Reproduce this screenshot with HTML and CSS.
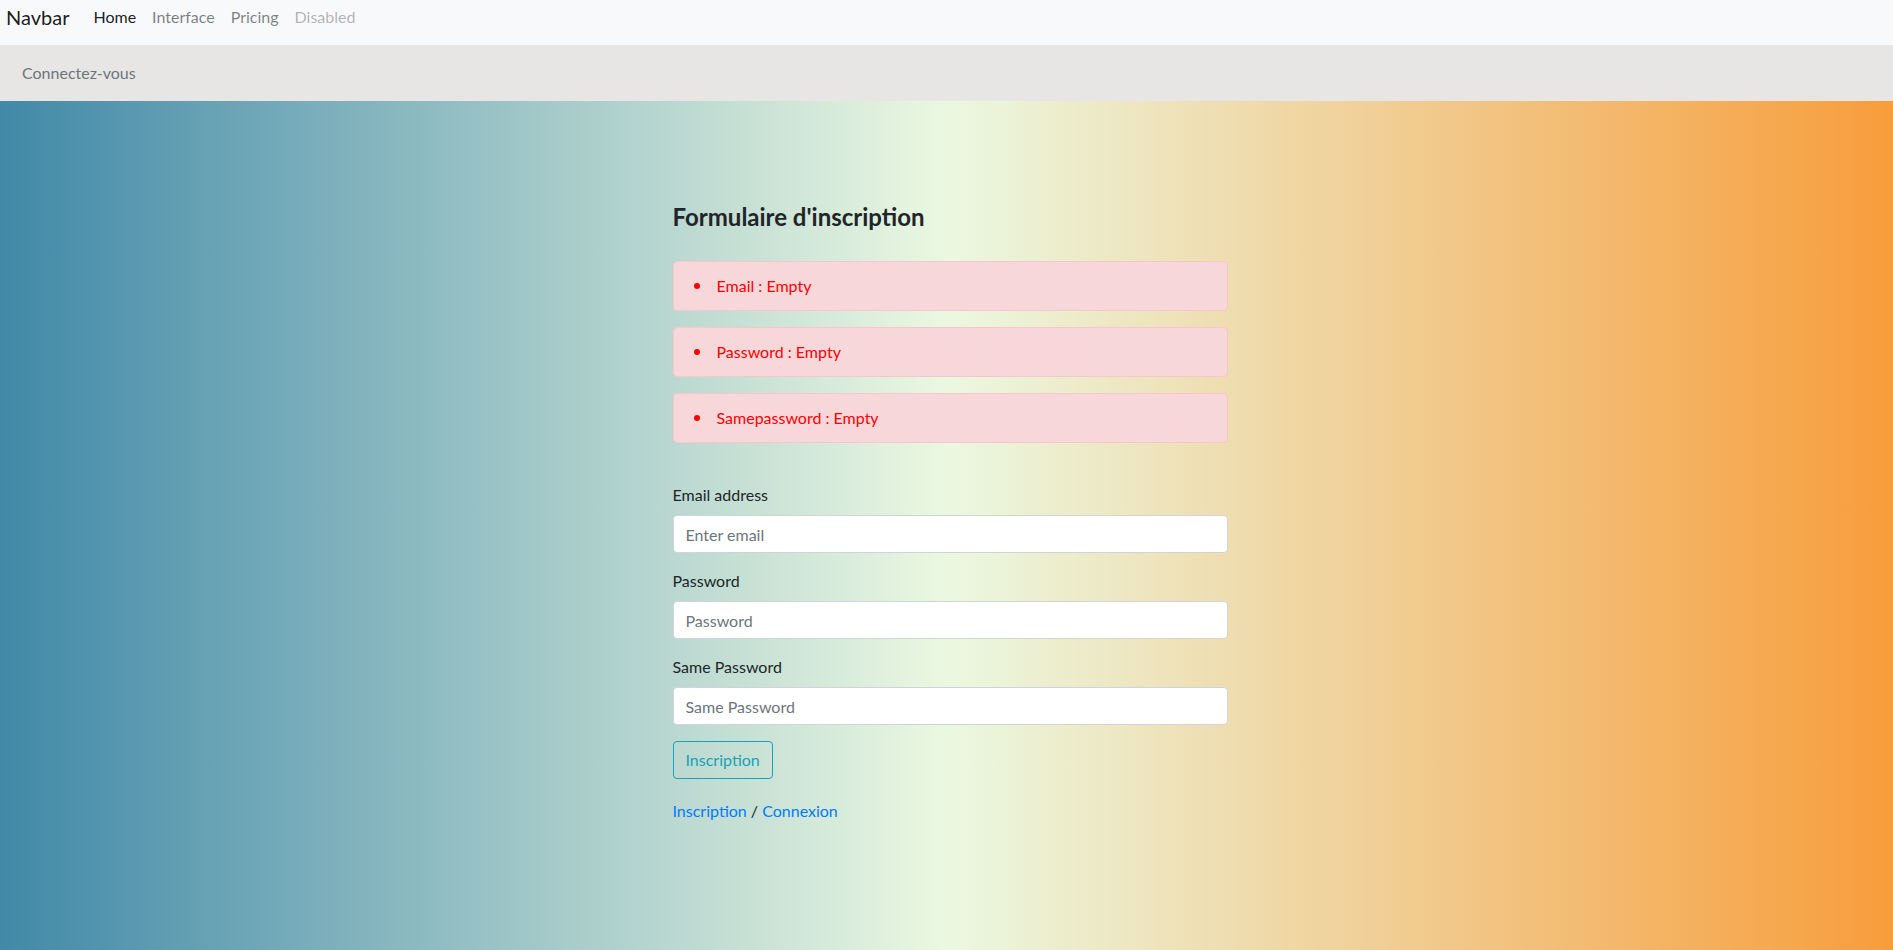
FILE: index.html
```html
<!DOCTYPE html>
<html lang="fr">
<head>
<meta charset="utf-8">
<title>Inscription</title>
<link rel="stylesheet" href="styles.css">
</head>
<body>
<nav class="navbar">
  <a class="brand" href="#">Navbar</a>
  <ul class="nav">
    <li><a class="nav-link active" href="#">Home</a></li>
    <li><a class="nav-link" href="#">Interface</a></li>
    <li><a class="nav-link" href="#">Pricing</a></li>
    <li><a class="nav-link disabled" href="#">Disabled</a></li>
  </ul>
</nav>
<div class="subbar">Connectez-vous</div>
<main class="main">
  <div class="form-col">
    <h4 class="title">Formulaire d'inscription</h4>
    <div class="alert"><ul><li>Email : Empty</li></ul></div>
    <div class="alert"><ul><li>Password : Empty</li></ul></div>
    <div class="alert"><ul><li>Samepassword : Empty</li></ul></div>
    <form class="form">
      <div class="form-group">
        <label for="email">Email address</label>
        <input id="email" type="email" placeholder="Enter email">
      </div>
      <div class="form-group">
        <label for="pw">Password</label>
        <input id="pw" type="password" placeholder="Password">
      </div>
      <div class="form-group">
        <label for="pw2">Same Password</label>
        <input id="pw2" type="password" placeholder="Same Password">
      </div>
      <button type="button" class="btn">Inscription</button>
    </form>
    <p class="links"><a href="#">Inscription</a> / <a href="#">Connexion</a></p>
  </div>
</main>
</body>
</html>
```
FILE: styles.css
```css
* { box-sizing: border-box; }
html, body { margin: 0; padding: 0; }
body {
  font-family: Lato, "Open Sans", sans-serif;
  font-size: 16px;
  line-height: 1.5;
  color: #212529;
  background: #fff;
}
a { text-decoration: none; }

.navbar {
  height: 45px;
  background: #f8f9fa;
  display: flex;
  align-items: flex-start;
  padding: 2px 6px 0;
}
.brand {
  font-size: 20px;
  color: rgba(0,0,0,.9);
  margin-right: 16px;
  line-height: 30px;
}
.nav {
  list-style: none;
  margin: 0;
  padding: 3px 0 0;
  display: flex;
}
.nav-link {
  display: block;
  padding: 0 8px;
  color: rgba(0,0,0,.5);
  line-height: 24px;
}
.nav-link.active { color: rgba(0,0,0,.9); }
.nav-link.disabled { color: rgba(0,0,0,.3); }

.subbar {
  height: 56px;
  background: #e7e6e4;
  color: #6c757d;
  padding: 0 22px;
  display: flex;
  align-items: center;
}

.main {
  min-height: 849px;
  background: linear-gradient(to right, #4189a8 0%, #ebf8e1 50%, #f79d3b 100%);
  padding-top: 101px;
  padding-bottom: 40px;
}
.form-col {
  width: 555px;
  margin-left: calc(50% - 274px);
}
.title {
  font-size: 24px;
  font-weight: 700;
  line-height: 29px;
  margin: 0 0 30px;
}
.alert {
  background: #f8d7da;
  border: 1px solid #f5c6cb;
  border-radius: 4px;
  color: #ff0000;
  padding: 12px 20px;
  margin-bottom: 16px;
}
.alert ul {
  margin: 0;
  padding: 0;
  list-style: none;
}
.alert li {
  display: flex;
  align-items: center;
}
.alert li::before {
  content: "";
  width: 6px;
  height: 6px;
  border-radius: 50%;
  background: #ff0000;
  margin-right: 17px;
  flex: none;
}
.form { margin-top: 40px; }
.form-group { margin-bottom: 16px; }
.form-group label {
  display: block;
  margin-bottom: 8px;
}
.form-group input {
  display: block;
  width: 100%;
  height: 38px;
  padding: 6px 12px;
  font: inherit;
  color: #495057;
  background: #fff;
  border: 1px solid #ced4da;
  border-radius: 4px;
}
.form-group input::placeholder { color: #6c757d; }
.btn {
  font: inherit;
  color: #17a2b8;
  background: transparent;
  border: 1px solid #17a2b8;
  border-radius: 4px;
  padding: 6px 12px;
  height: 38px;
  line-height: 24px;
}
.links {
  margin: 20px 0 0;
}
.links a { color: #007bff; }
```
